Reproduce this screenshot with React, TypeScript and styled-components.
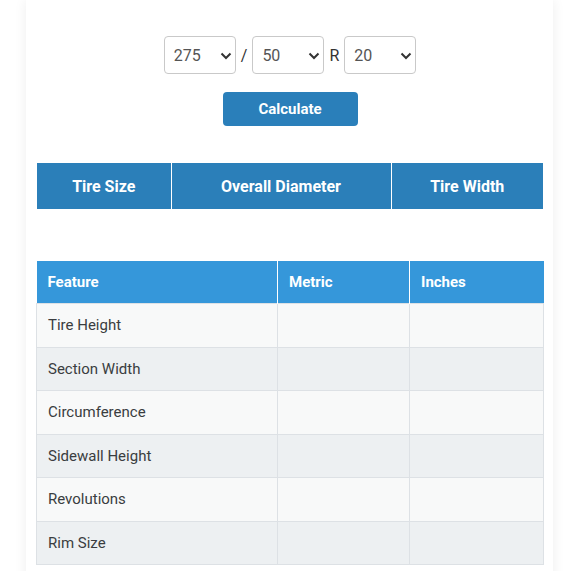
import React, { useState } from "react";
import styled, { createGlobalStyle } from "styled-components";

const GlobalStyle = createGlobalStyle`
  body {
    margin: 0;
    background: #ffffff;
    font-family: Roboto, "Liberation Sans", Arial, sans-serif;
    color: #333;
  }
`;

const Card = styled.div`
  margin: 0 26px;
  width: 527px;
  box-sizing: border-box;
  padding: 36px 10px 20px 11px;
  background: #fff;
  box-shadow: 0 0 12px rgba(0, 0, 0, 0.07);
`;

const SizeRow = styled.div`
  display: flex;
  justify-content: center;
  align-items: center;
  gap: 5px;
`;

const SelectWrap = styled.div`
  position: relative;
  width: 72px;
  height: 38px;
`;

const Chevron = styled.svg`
  position: absolute;
  right: 4px;
  top: 16px;
  pointer-events: none;
`;

const Select = styled.select`
  appearance: none;
  width: 100%;
  height: 100%;
  box-sizing: border-box;
  border: 1px solid #c9c9c9;
  border-radius: 4px;
  background: #fff;
  padding: 0 0 0 9px;
  font-family: Roboto, "Liberation Sans", Arial, sans-serif;
  font-size: 16px;
  color: #555;
  outline: none;
`;

const Sep = styled.span`
  font-size: 16px;
  color: #333;
`;

const ButtonRow = styled.div`
  display: flex;
  justify-content: center;
  margin-top: 18px;
`;

const CalcButton = styled.button`
  width: 135px;
  height: 34px;
  border: none;
  border-radius: 4px;
  background: #2a7fba;
  color: #fff;
  font-family: Roboto, "Liberation Sans", Arial, sans-serif;
  font-weight: 700;
  font-size: 15px;
  cursor: pointer;
`;

const Col = styled.col<{ $w: number }>`
  width: ${(p) => p.$w}px;
`;

const ResultTable = styled.table`
  width: 506px;
  margin-top: 37px;
  border-collapse: collapse;
  table-layout: fixed;

  th {
    height: 46px;
    background: #2b7fb9;
    color: #fff;
    font-weight: 700;
    font-size: 16px;
    text-align: center;
    border-left: 1px solid #fff;
    padding: 0;
  }
  th:first-child {
    border-left: none;
  }
`;

const FeatureTable = styled.table`
  width: 507px;
  margin-top: 52px;
  margin-left: -1px;
  border-collapse: collapse;
  table-layout: fixed;

  th {
    height: 42px;
    background: #3597da;
    color: #fff;
    font-weight: 700;
    font-size: 15px;
    text-align: left;
    padding: 0 11px;
    border-left: 1px solid #fff;
  }
  th:first-child {
    border-left: none;
  }

  td {
    height: 42.5px;
    padding: 0 11px;
    font-size: 15px;
    color: #3a3d40;
    border: 1px solid #dde1e5;
  }
`;

const Row = styled.tr<{ $shade: boolean }>`
  background: ${(p) => (p.$shade ? "#edf0f2" : "#f8f9f9")};
`;

const features = [
  "Tire Height",
  "Section Width",
  "Circumference",
  "Sidewall Height",
  "Revolutions",
  "Rim Size",
];

const SizeSelect = ({
  value,
  options,
  onChange,
}: {
  value: string;
  options: string[];
  onChange: (v: string) => void;
}) => (
  <SelectWrap>
    <Select value={value} onChange={(e) => onChange(e.target.value)}>
      {options.map((o) => (
        <option key={o} value={o}>
          {o}
        </option>
      ))}
    </Select>
    <Chevron width="12" height="8" viewBox="0 0 12 8">
      <polyline points="1.5,1.5 6,6 10.5,1.5" fill="none" stroke="#333" strokeWidth="2" />
    </Chevron>
  </SelectWrap>
);

export default function App() {
  const [width, setWidth] = useState("275");
  const [ratio, setRatio] = useState("50");
  const [rim, setRim] = useState("20");

  return (
    <>
      <GlobalStyle />
      <Card>
        <SizeRow>
          <SizeSelect value={width} options={["255", "265", "275", "285"]} onChange={setWidth} />
          <Sep>/</Sep>
          <SizeSelect value={ratio} options={["40", "45", "50", "55"]} onChange={setRatio} />
          <Sep>R</Sep>
          <SizeSelect value={rim} options={["18", "19", "20", "21"]} onChange={setRim} />
        </SizeRow>
        <ButtonRow>
          <CalcButton>Calculate</CalcButton>
        </ButtonRow>

        <ResultTable>
          <colgroup>
            <Col $w={134} />
            <Col $w={220} />
            <Col $w={152} />
          </colgroup>
          <thead>
            <tr>
              <th>Tire Size</th>
              <th>Overall Diameter</th>
              <th>Tire Width</th>
            </tr>
          </thead>
        </ResultTable>

        <FeatureTable>
          <colgroup>
            <Col $w={241} />
            <Col $w={132} />
            <Col $w={134} />
          </colgroup>
          <thead>
            <tr>
              <th>Feature</th>
              <th>Metric</th>
              <th>Inches</th>
            </tr>
          </thead>
          <tbody>
            {features.map((f, i) => (
              <Row key={f} $shade={i % 2 === 1}>
                <td>{f}</td>
                <td></td>
                <td></td>
              </Row>
            ))}
          </tbody>
        </FeatureTable>
      </Card>
    </>
  );
}
